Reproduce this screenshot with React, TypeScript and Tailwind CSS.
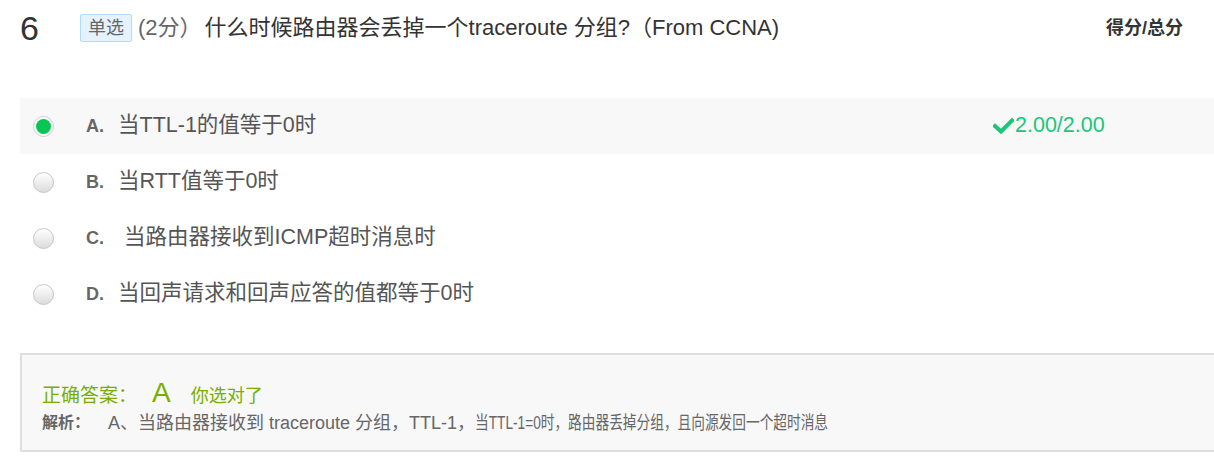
import React from "react";

function Radio({ checked }: { checked?: boolean }) {
  if (checked) {
    return (
      <span className="flex h-[21px] w-[21px] items-center justify-center rounded-full border border-[#cfcfcf] bg-white">
        <span className="h-[15px] w-[15px] rounded-full bg-[#07c653]" />
      </span>
    );
  }
  return (
    <span className="block h-[21px] w-[21px] rounded-full border border-[#c4c4c4] bg-gradient-to-b from-[#ffffff] to-[#dcdcdc]" />
  );
}

const options = [
  { key: "A", text: "当TTL-1的值等于0时", checked: true },
  { key: "B", text: "当RTT值等于0时" },
  { key: "C", text: "\u00a0当路由器接收到ICMP超时消息时" },
  { key: "D", text: "当回声请求和回声应答的值都等于0时" },
];

export default function App() {
  return (
    <div className="w-[1214px] h-[476px] overflow-hidden bg-white font-['Liberation_Sans','Noto_Sans_CJK_SC',sans-serif]">
      {/* header */}
      <div className="flex h-[56px] items-center pl-[20px] pr-[31px]">
        <div className="w-[60px] text-[34px] leading-none text-[#333]">6</div>
        <span className="flex h-[28px] w-[52px] items-center justify-center rounded-[2px] border border-[#b3dafa] bg-[#e4f3ff] text-[18px] leading-none text-[#666]">
          单选
        </span>
        <span className="ml-[6px] text-[22px] leading-none text-[#666]">(2分）</span>
        <span className="ml-[3px] text-[22px] leading-none text-[#333]">
          什么时候路由器会丢掉一个traceroute 分组?（From CCNA)
        </span>
        <div className="flex-1" />
        <span className="text-[18px] font-bold leading-none text-[#333]">得分/总分</span>
      </div>

      {/* options */}
      <div className="mt-[42px] pl-[20px]">
        {options.map((o) => (
          <div
            key={o.key}
            className={`flex h-[56px] items-center pl-[13px] ${o.checked ? "bg-[#f8f8f8]" : ""}`}
          >
            <Radio checked={o.checked} />
            <span className="ml-[32px] w-[32px] text-[18px] font-bold leading-none text-[#666]">
              {o.key}.
            </span>
            <span className="flex-1 text-[21.5px] leading-none text-[#555]">{o.text}</span>
            {o.checked && (
              <div className="flex w-[221px] items-center text-[21.5px] leading-none text-[#1cc57a]">
                <svg width="21" height="16" viewBox="0 0 21 16" className="mr-[1px]">
                  <polyline
                    points="2,8 8,13.5 19,2.5"
                    fill="none"
                    stroke="#1cc57a"
                    strokeWidth="4"
                    strokeLinecap="square"
                  />
                </svg>
                <span>2.00/2.00</span>
              </div>
            )}
          </div>
        ))}
      </div>

      {/* analysis */}
      <div className="ml-[20px] mt-[31px] border-y-2 border-l-2 border-[#dedede] bg-[#f8f8f8] pl-[20px] pt-[22px] pb-[17px]">
        <div className="h-[31px] leading-[31px] text-[#77ae00] whitespace-nowrap">
          <span className="text-[19px]">正确答案：</span>
          <span className="ml-[15px] text-[28px]">A</span>
          <span className="ml-[20px] text-[18px]">你选对了</span>
        </div>
        <div className="mt-[5px] flex h-[20px] items-center whitespace-nowrap text-[#666]">
          <span className="w-[66px] text-[16px] font-bold leading-none">解析：</span>
          <span className="text-[18px] leading-none">A、当路由器接收到 traceroute 分组，TTL-1，</span>
          <span className="inline-block origin-left [transform:scaleX(0.76)] text-[18px] leading-none">
            当TTL-1=0时，路由器丢掉分组，且向源发回一个超时消息
          </span>
        </div>
      </div>
    </div>
  );
}
